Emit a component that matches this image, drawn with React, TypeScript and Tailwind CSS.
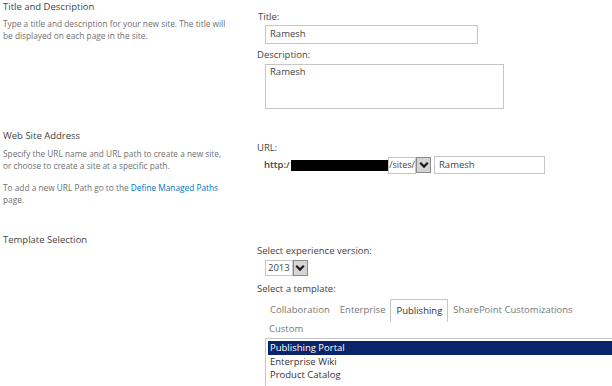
const Arrow = () => (
  <span className="flex h-[16px] w-[15px] items-center justify-center border border-[#8a8a8a] bg-[#d4d4d4]">
    <svg width="10" height="8" viewBox="0 0 10 8">
      <path d="M1.2 1.8 L5 5.6 L8.8 1.8" fill="none" stroke="#1a1a1a" strokeWidth="2.2" />
    </svg>
  </span>
);

const Section = ({
  title,
  children,
  right,
  className,
}: {
  title: string;
  children?: React.ReactNode;
  right: React.ReactNode;
  className?: string;
}) => (
  <div className={`flex ${className ?? ""}`}>
    <div className="w-[256px] shrink-0 pl-[3px]">
      <h3 className="text-[9.5px] leading-[12px] text-[#444]">{title}</h3>
      {children}
    </div>
    <div className="flex-1 pl-[1px]">{right}</div>
  </div>
);

export default function App() {
  return (
    <div
      className="h-[386px] w-[612px] overflow-hidden bg-white"
      style={{ fontFamily: '"Open Sans", "Noto Sans", sans-serif' }}
    >
      <Section
        className="pt-[1px]"
        title="Title and Description"
        right={
          <div className="pt-[10px]">
            <div className="pl-[1px] text-[9.5px] leading-[12px] text-[#444]">Title:</div>
            <div className="ml-[8px] mt-[2px] flex h-[19px] w-[213px] items-center border border-[#c6c6c6] px-[4px] text-[9.5px] text-[#444]">
              Ramesh
            </div>
            <div className="mt-[5px] text-[9.5px] leading-[12px] text-[#444]">Description:</div>
            <div className="ml-[8px] mt-[3px] h-[45px] w-[239px] border border-[#c6c6c6] px-[4px] pt-[1px] text-[9.5px] leading-[12px] text-[#444]">
              Ramesh
            </div>
          </div>
        }
      >
        <p className="mt-[5px] w-[229px] text-[8.3px] leading-[11.5px] text-[#6f6f6f]">
          Type a title and description for your new site. The title will be displayed on each page in the site.
        </p>
      </Section>

      <Section
        className="mt-[21px]"
        title="Web Site Address"
        right={
          <div className="pt-[12px]">
            <div className="text-[9.5px] leading-[12px] text-[#444]">URL:</div>
            <div className="ml-[7px] mt-[2px] flex items-center">
              <span className="w-[27px] text-[9.5px] font-semibold text-[#444]">http:/</span>
              <span className="h-[11px] w-[97px] bg-black" />
              <span className="flex h-[17px] w-[28px] items-center justify-center border border-[#c6c6c6] text-[9px] text-[#444]">
                /sites/
              </span>
              <Arrow />
              <span className="ml-[3px] flex h-[18px] w-[111px] items-center border border-[#c6c6c6] px-[4px] text-[9.5px] text-[#444]">
                Ramesh
              </span>
            </div>
          </div>
        }
      >
        <p className="mt-[6px] w-[224px] text-[8.3px] leading-[11.5px] text-[#6f6f6f]">
          Specify the URL name and URL path to create a new site, or choose to create a site at a specific path.
        </p>
        <p className="mt-[11px] w-[229px] text-[8.3px] leading-[11.5px] text-[#6f6f6f]">
          To add a new URL Path go to the <span className="text-[#0072c6]">Define Managed Paths</span> page.
        </p>
      </Section>

      <Section
        className="mt-[29px]"
        title="Template Selection"
        right={
          <div className="pt-[11px]">
            <div className="text-[9.5px] leading-[12px] text-[#444]">Select experience version:</div>
            <div className="ml-[8px] mt-[3px] flex items-center">
              <span className="flex h-[16px] items-center border border-[#c6c6c6] px-[2px] text-[9.5px] text-[#444]">
                2013
              </span>
              <Arrow />
            </div>
            <div className="mt-[7px] text-[9.5px] leading-[12px] text-[#444]">Select a template:</div>
            <div className="ml-[8px] mt-[4px] flex flex-wrap items-end text-[9.5px] text-[#777]">
              <span className="flex h-[23px] items-center px-[5px]">Collaboration</span>
              <span className="flex h-[23px] items-center px-[5px]">Enterprise</span>
              <span className="flex h-[23px] items-center border border-b-0 border-[#c6c6c6] px-[5px] text-[#333]">
                Publishing
              </span>
              <span className="flex h-[23px] items-center px-[5px]">SharePoint Customizations</span>
              <span className="flex h-[15px] w-full items-center px-[4px]">Custom</span>
            </div>
            <div className="ml-[8px] mt-[1px] h-[60px] border border-r-0 border-[#c6c6c6] pl-[2px] pt-[2px] text-[9.5px] leading-[13.5px] text-[#333]">
              <div className="bg-[#0a246a] pl-[2px] text-white">Publishing Portal</div>
              <div className="pl-[2px]">Enterprise Wiki</div>
              <div className="pl-[2px]">Product Catalog</div>
            </div>
          </div>
        }
      />
    </div>
  );
}
